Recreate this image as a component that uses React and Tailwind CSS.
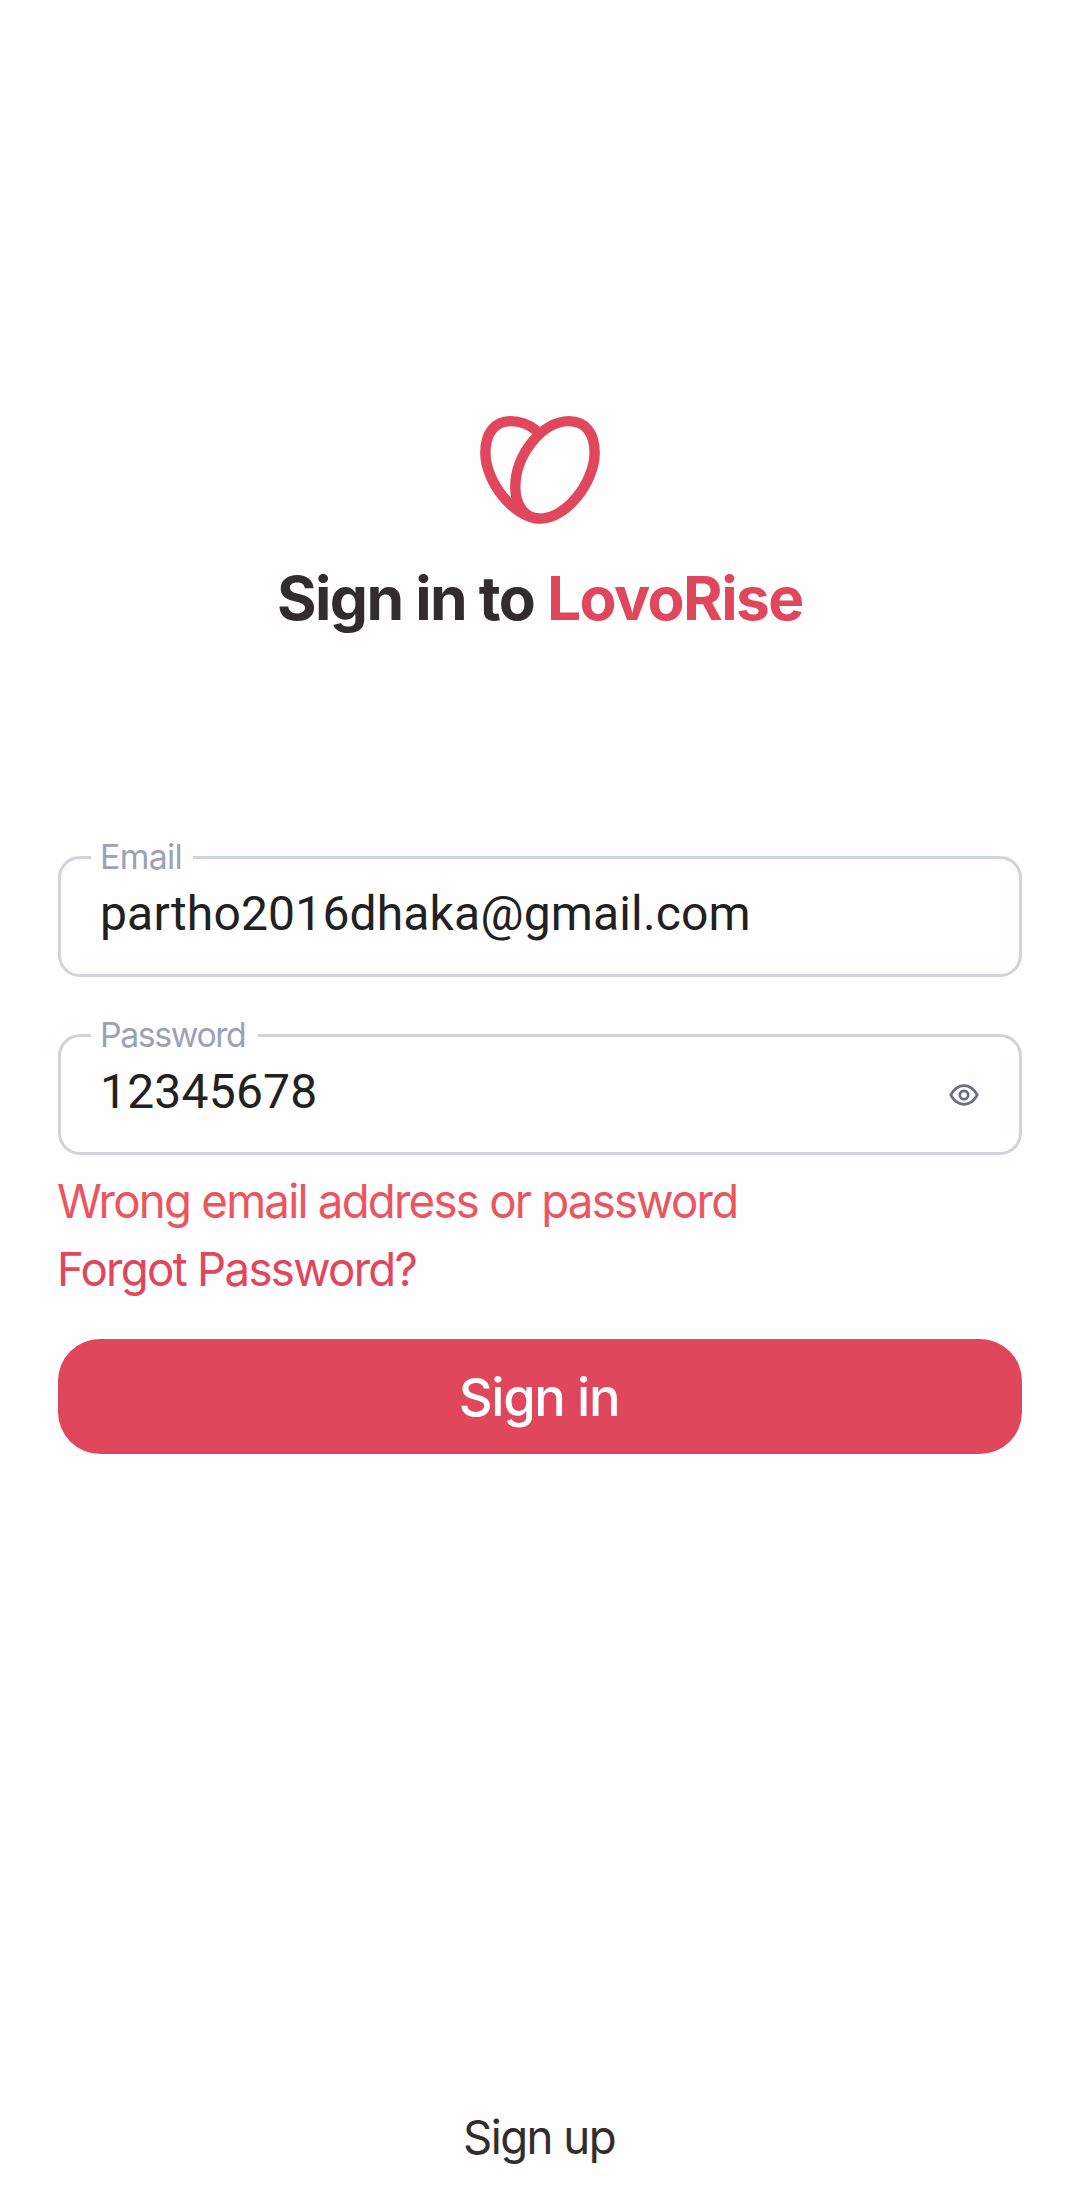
import React from "react";

const INTER = "font-['Inter',sans-serif]";

function Logo() {
  return (
    <svg className="ml-[422px] block h-[108px] w-[120px]" viewBox="60.5 48 357 324" preserveAspectRatio="none" fill="none" stroke="#E0475C" strokeWidth="31">
      <path d="M229 92C207 74 180 63.5 152 63.5C105 63.5 76.500 98 76.500 158C76.500 245 162 356 240 356" />
      <path d="M325 63.500C373 63.500 401.500 98 401.500 158C401.500 245 318 356 240 356C195 356 165.500 318 165.500 262C165.500 165 245 63.500 325 63.500Z" />
    </svg>
  );
}

function Field({ label, labelClass, notchClass, value, valueClass, children }) {
  return (
    <div className="relative flex h-[121px] items-start justify-between rounded-[22px] border-[3px] border-[#CFD3DB] pr-[40px] pl-[39px]">
      <div className={`absolute top-[-23px] left-[30px] h-[42px] bg-[#FEFEFE] pl-[9px] ${notchClass}`}>
        <span className={`block origin-left scale-x-[0.98] text-[34.5px] leading-[42px] whitespace-nowrap text-[#9AA3B5] ${labelClass}`}>{label}</span>
      </div>
      <span className={`mt-[25px] font-['Roboto',sans-serif] text-[48px] leading-[60px] text-[#212121] ${valueClass}`}>{value}</span>
      {children}
    </div>
  );
}

function EyeIcon() {
  return (
    <svg className="mt-[47px] h-[22px] w-[30px]" viewBox="0 0 30 22" fill="none" stroke="#667085" strokeWidth="2.7">
      <path d="M1.700 11C4.500 6 9 1.700 15 1.700S25.500 6 28.300 11C25.500 16 21 20.300 15 20.300S4.500 16 1.700 11Z" strokeLinejoin="round" />
      <circle cx="15" cy="11" r="4.200" />
    </svg>
  );
}

export default function App() {
  return (
    <main className={`flex h-[2210px] w-[1080px] flex-col bg-[#FEFEFE] px-[58px] pt-[416px] ${INTER}`}>
      <Logo />
      <h1 className="mt-[34px] ml-[219px] text-[60.5px] leading-[80px] font-bold tracking-[-1.6px] whitespace-nowrap text-[#322D2D]">
        Sign in to <span className="text-[#E0475C]">LovoRise</span>
      </h1>

      <div className="mt-[218px] flex flex-col gap-[57px]">
        <Field label="Email" labelClass="tracking-[-0.64px]" notchClass="w-[102px]" value="partho2016dhaka@gmail.com" valueClass="tracking-[0.16px]" />
        <Field label="Password" labelClass="tracking-[-1.41px]" notchClass="w-[167px]" value="12345678" valueClass="tracking-[0.2px]">
          <EyeIcon />
        </Field>
      </div>

      <p className="mt-[16px] -ml-px origin-left scale-x-[0.98] text-[46.5px] leading-[60px] tracking-[-1.78px] whitespace-nowrap text-[#EA5660]">
        Wrong email address or password
      </p>
      <a className="mt-[8px] -ml-px origin-left scale-x-[0.98] text-[46.5px] leading-[60px] tracking-[-1.71px] whitespace-nowrap text-[#E0475C]">
        Forgot Password?
      </a>

      <button className="mt-[40px] flex h-[115px] items-center justify-center rounded-[42px] bg-[#E0475C] pr-[2px] text-white">
        <span className="text-[52.5px] leading-[64px] font-medium tracking-[-1.4px]">Sign in</span>
      </button>
      <a className="mt-[653px] scale-x-[0.98] pr-[2px] text-center text-[46.5px] leading-[60px] tracking-[-1.55px] text-[#322D2D]">Sign up</a>
    </main>
  );
}
